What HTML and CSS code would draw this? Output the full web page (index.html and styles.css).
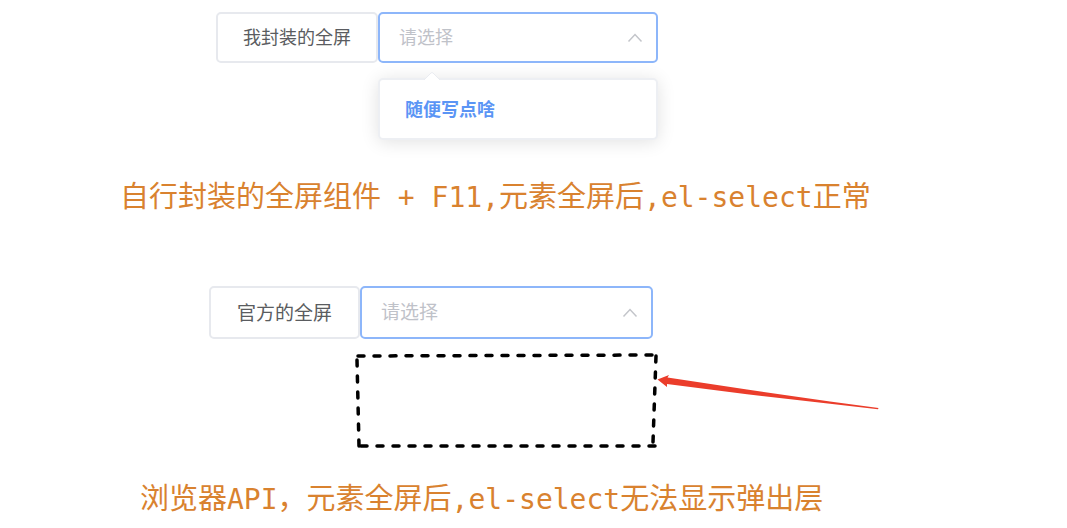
FILE: index.html
```html
<!DOCTYPE html>
<html lang="zh-CN">
<head>
<meta charset="utf-8">
<title>el-select 全屏</title>
<link rel="stylesheet" href="styles.css">
</head>
<body>
<main class="page">
  <section class="demo demo-custom">
    <div class="controls">
      <button class="btn" type="button">我封装的全屏</button>
      <div class="field">
        <div class="select-box">
          <select class="select" aria-label="请选择"><option>请选择</option></select>
          <svg class="chevron" viewBox="0 0 16 10" aria-hidden="true"><path d="M1.5 8.5 8 1.5l6.5 7"/></svg>
        </div>
        <div class="popper">
          <svg class="popper-arrow" viewBox="0 0 16 8" aria-hidden="true"><path d="M0 8 7 1q1-1 2 0l7 7"/></svg>
          <button class="option" type="button">随便写点啥</button>
        </div>
      </div>
    </div>
    <p class="caption">自行封装的全屏组件<span class="latin"> + F11,</span>元素全屏后<span class="latin">,el-select</span>正常</p>
  </section>

  <section class="demo demo-native">
    <div class="controls">
      <button class="btn" type="button">官方的全屏</button>
      <div class="field">
        <div class="select-box">
          <select class="select" aria-label="请选择"><option>请选择</option></select>
          <svg class="chevron" viewBox="0 0 16 10" aria-hidden="true"><path d="M1.5 8.5 8 1.5l6.5 7"/></svg>
        </div>
      </div>
    </div>
    <svg class="sketch" viewBox="350 350 540 100" aria-hidden="true">
      <g class="dashes">
        <path d="M358 356 656 355"/>
        <path d="M357 360 359 446"/>
        <path d="M361 446 655 446"/>
        <path d="M656 356 653 442"/>
      </g>
      <path class="pointer" d="M657.5 379.500 669 375 667.500 377.500 747 389.500 830 401.500 878.500 408 878 409.300 830 403.800 747 394.200 667 384 667 387Z"/>
    </svg>
    <p class="caption">浏览器<span class="latin">API</span>，元素全屏后<span class="latin">,el-select</span>无法显示弹出层</p>
  </section>
</main>
</body>
</html>
```
FILE: styles.css
```css
* {
  box-sizing: border-box;
}

body {
  margin: 0;
  background: #fff;
  font-family: "Liberation Sans", "Noto Sans CJK SC", sans-serif;
}

.page {
  padding-top: 12px;
}

.controls {
  display: flex;
  align-items: flex-start;
}

.demo-custom {
  --size: 18px;
  --height: 51px;
  --pad: 25px;
}

.demo-native {
  --size: 19px;
  --height: 53px;
  --pad: 26px;
  margin-top: 66px;
}

.demo-custom .controls {
  margin-left: 216px;
}

.demo-native .controls {
  margin-left: 209px;
}

.btn {
  height: var(--height);
  padding: 0 var(--pad) 3px;
  border: 2px solid #e7e9ee;
  border-radius: 5px;
  background: #fff;
  color: #5a5c60;
  font: inherit;
  font-size: var(--size);
  white-space: nowrap;
}

.demo-custom .field {
  width: 280px;
}

.demo-native .field {
  width: 293px;
}

.select-box {
  display: grid;
  align-items: center;
}

.select,
.chevron {
  grid-area: 1 / 1;
}

.select {
  width: 100%;
  height: var(--height);
  padding: 0 48px 0 19px;
  appearance: none;
  border: 2px solid #8db6fa;
  border-radius: 5px;
  background: #fff;
  color: #bfc2c9;
  font: inherit;
  font-size: var(--size);
}

.chevron {
  justify-self: end;
  width: 16px;
  height: 10px;
  margin-right: 15px;
  fill: none;
  stroke: #c3c5ca;
  stroke-width: 1.5;
  pointer-events: none;
}

.popper {
  position: relative;
  margin-top: 15px;
  padding: 11px 0 13px;
  border: 2px solid #edeff3;
  border-radius: 5px;
  background: #fff;
  box-shadow: 0 2px 18px rgba(0, 0, 0, 0.12);
}

.popper-arrow {
  position: absolute;
  top: -8px;
  left: 44px;
  width: 16px;
  height: 8px;
  fill: #fff;
  stroke: #eaecf1;
}

.option {
  display: block;
  width: 100%;
  height: 34px;
  padding: 0 25px;
  border: 0;
  background: #fff;
  color: #5b95f5;
  font: inherit;
  font-size: 18px;
  font-weight: 700;
  text-align: left;
}

.caption {
  margin: 0;
  color: #d9822f;
  font-size: 29px;
  line-height: 44px;
  white-space: nowrap;
}

.demo-custom .caption {
  margin: 35px 0 0 120px;
}

.demo-native .caption {
  margin: 27px 0 0 140px;
}

.latin {
  font-family: "DejaVu Sans Mono", monospace;
  font-size: 28px;
  white-space: pre;
}

.sketch {
  display: block;
  width: 540px;
  height: 100px;
  margin: 11px 0 0 350px;
}

.dashes {
  fill: none;
  stroke: #000;
  stroke-width: 3.5;
  stroke-linecap: round;
  stroke-dasharray: 6 10;
}

.pointer {
  fill: #eb3d2b;
}
```
